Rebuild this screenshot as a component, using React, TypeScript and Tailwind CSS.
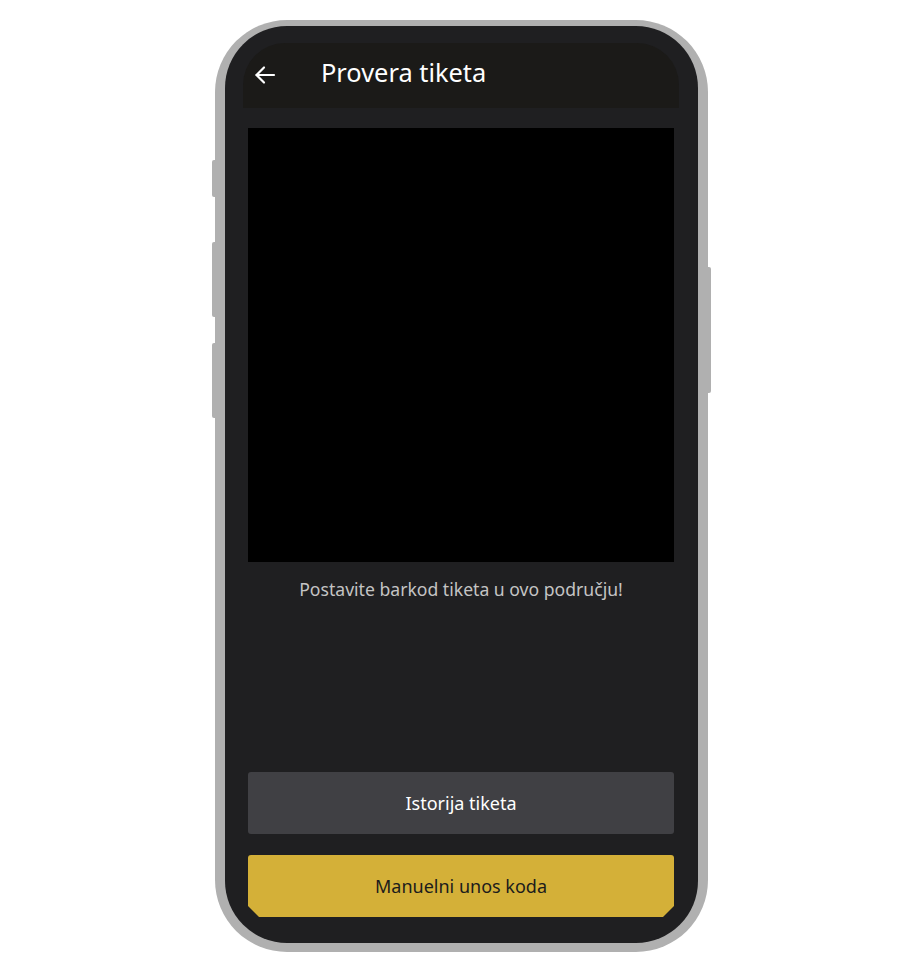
import React from "react";

export default function App() {
  return (
    <div className="w-[924px] h-[972px] bg-white overflow-hidden" style={{ fontFamily: '"Noto Sans", Inter, sans-serif' }}>
      <div className="pt-[20px] pl-[215px]">
        <div className="relative w-[493px] h-[932px] rounded-[72px] bg-[#b0b0b0] pt-[6px] px-[10px] pb-[9px]">
          {/* side buttons */}
          <div className="absolute left-[-3px] top-[140px] w-[4px] h-[37px] rounded-l-[2px] bg-[#b0b0b0]" />
          <div className="absolute left-[-3px] top-[222px] w-[4px] h-[75px] rounded-l-[2px] bg-[#b0b0b0]" />
          <div className="absolute left-[-3px] top-[323px] w-[4px] h-[75px] rounded-l-[2px] bg-[#b0b0b0]" />
          <div className="absolute right-[-3px] top-[247px] w-[4px] h-[126px] rounded-r-[2px] bg-[#b0b0b0]" />
          <div className="w-full h-full rounded-[62px] bg-[#1f1f21] pt-[17px] pl-[18px] pr-[19px] flex flex-col">
            <div className="h-[65px] rounded-t-[42px] bg-[#1b1a18] flex items-center pl-[10px] pb-[5px]">
              <svg width="24" height="24" viewBox="0 0 24 24" fill="none" stroke="white" strokeWidth="2.2" strokeLinecap="round" strokeLinejoin="round" className="mt-[3px]">
                <path d="M21 12H3.5" />
                <path d="M11 4.5L3.5 12L11 19.5" />
              </svg>
              <span className="ml-[44px] text-[25.4px] text-white leading-none">Provera tiketa</span>
            </div>
            <div className="flex-1 flex flex-col px-[5px] pt-[20px]">
              <div className="h-[434px] bg-black" />
              <div className="mt-[16px] text-center text-[17.6px] text-[#c4c4c4] leading-[22px]">Postavite barkod tiketa u ovo području!</div>
              <div className="flex-1" />
              <button className="h-[62px] w-full rounded-[3px] bg-[#404044] text-white text-[18px] flex items-center justify-center">Istorija tiketa</button>
              <button className="mt-[21px] h-[62px] w-full bg-[#d4b038] text-[#1c1c1c] text-[18px] flex items-center justify-center rounded-t-[3px] [clip-path:polygon(0_0,100%_0,100%_calc(100%-11px),calc(100%-11px)_100%,11px_100%,0_calc(100%-11px))]">Manuelni unos koda</button>
              <div className="h-[26px]" />
            </div>
          </div>
        </div>
      </div>
    </div>
  );
}
